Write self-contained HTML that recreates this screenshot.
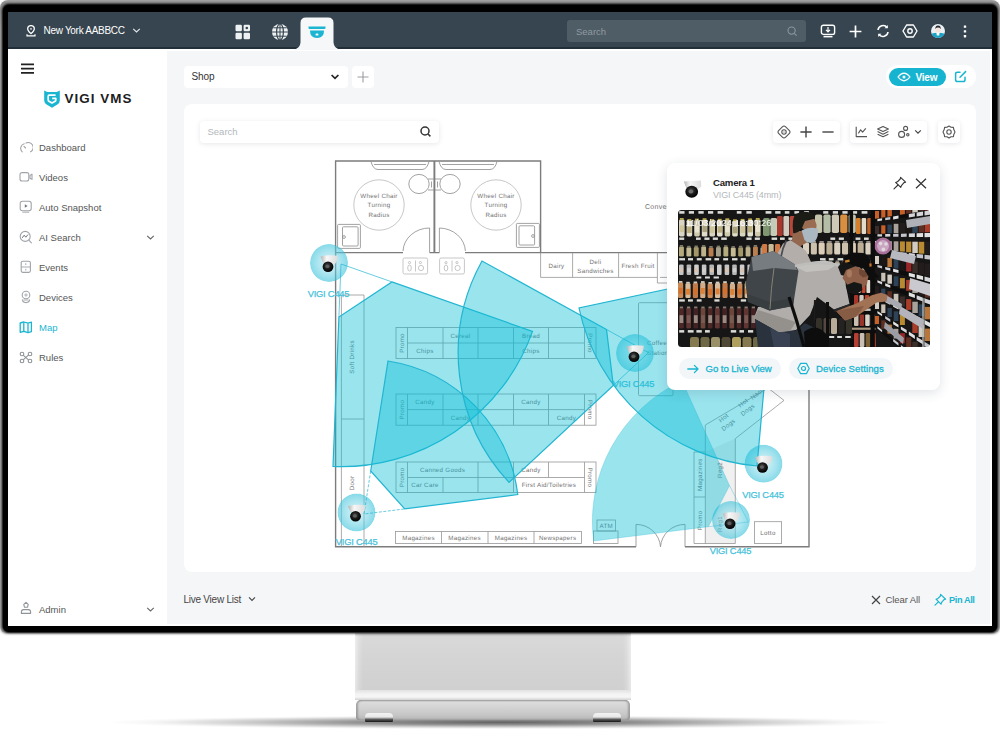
<!DOCTYPE html>
<html lang="en">
<head>
<meta charset="utf-8">
<title>VIGI VMS - Map</title>
<style>
*{box-sizing:border-box;margin:0;padding:0}
html,body{width:1000px;height:734px;overflow:hidden;background:#fff}
body{font-family:"Liberation Sans",sans-serif;color:#333;position:relative}
.abs{position:absolute}
#stage{position:absolute;left:0;top:0;width:1000px;height:734px;overflow:hidden;background:#fff}
/* monitor */
#bezel-edge{left:0;top:0;width:1000px;height:632.5px;border-radius:8px 8px 6px 6px;background:linear-gradient(#a2a2a2 0,#8c8c8c 3px,#a6a6a6 30px,#a6a6a6 100%);box-shadow:0 1px 2px rgba(0,0,0,.25)}
#bezel{left:3.2px;top:4.6px;width:993.8px;height:627px;border-radius:6px;background:#000;box-shadow:0 0 2.5px .8px #000,0 -1px 2px 0 rgba(0,0,0,.6)}
#screen{left:8px;top:12px;width:984px;height:614px;background:#fff;overflow:hidden}
#cbg{left:167px;top:51px;width:822.8px;height:573px;background:#f5f6f8}
/* screen children are positioned in page coords via #sc (offset -8,-12) */
#sc{position:absolute;left:-8px;top:-12px;width:1000px;height:734px}
#topbar{left:8px;top:12px;width:984px;height:37.3px;background:#36454f;border-bottom:2.2px solid #232f38}
#sidebar{left:8px;top:49.3px;width:159px;height:576.7px;background:#fff}
#wline{left:8px;top:49.3px;width:984px;height:1.8px;background:#fff}
.nav{position:absolute;left:39px;font-size:9.5px;color:#555;white-space:nowrap;line-height:12px}
.card{background:#fff;border-radius:5px}
.sh{box-shadow:0 1px 5px rgba(60,70,90,.13)}
.t{position:absolute;white-space:nowrap;line-height:1}
</style>
</head>
<body>
<div id="stage">
  <!-- stand -->
  <div class="abs" id="shadow" style="left:105px;top:716px;width:790px;height:14px;background:radial-gradient(ellipse 50% 50% at 50% 45%,rgba(60,60,60,.8) 0,rgba(80,80,80,.62) 36%,rgba(110,110,110,.3) 68%,rgba(160,160,160,.1) 88%,rgba(255,255,255,0) 100%)"></div>
  <div class="abs" id="neck" style="left:355px;top:630px;width:276px;height:60px;background:linear-gradient(90deg,#ececec 0,#dcdcdc 4px,#d4d4d4 8px,#d4d4d4 268px,#dcdcdc 272px,#ececec 276px)"></div>
  <div class="abs" style="left:355px;top:630px;width:276px;height:60px;background:linear-gradient(rgba(150,150,150,.45) 0,rgba(255,255,255,.12) 7px,rgba(255,255,255,0) 30px,rgba(0,0,0,.02) 60px)"></div>
  <div class="abs" style="left:355px;top:690px;width:276px;height:10px;background:linear-gradient(#e2e2e2 0,#f3f3f3 4px,#f6f6f6 7px,#d2d2d2 10px)"></div>
  <div class="abs" id="base" style="left:356px;top:699.5px;width:274px;height:20px;border-radius:5px 5px 3px 3px;background:linear-gradient(#aeaeae 0,#dcdcdc 2px,#d2d2d2 8px,#c6c6c6 15px,#b4b4b4 20px);box-shadow:inset 2px 0 2px rgba(120,120,120,.55),inset -2px 0 2px rgba(120,120,120,.55)"></div>
  <div class="abs" style="left:365px;top:713px;width:28px;height:9px;border-radius:4px 4px 1px 1px;background:linear-gradient(#f2f2f2 0,#e8e8e8 4px,#555 6.5px,#161616 9px)"></div>
  <div class="abs" style="left:593px;top:713px;width:28px;height:9px;border-radius:4px 4px 1px 1px;background:linear-gradient(#f2f2f2 0,#e8e8e8 4px,#555 6.5px,#161616 9px)"></div>

  <div class="abs" id="bezel-edge"></div>
  <div class="abs" id="bezel"></div>
  <div class="abs" id="screen"><div id="sc">
    <div class="abs" id="cbg"></div>
    <div class="abs" id="topbar"></div>
    <div class="abs" id="sidebar"></div>
    <div class="abs" id="wline"></div>
        <!-- active tab -->
    <svg class="abs" style="left:290px;top:12px" width="56" height="38" viewBox="290 12 56 38">
      <path d="M293.5 49.4 Q300 49 300.5 42.5 L300.5 23 Q300.5 17.5 306 17.5 L328 17.5 Q333.5 17.5 333.5 23 L333.5 42.5 Q334 49 340.5 49.4 L340.5 50 L293.5 50 Z" fill="#f6f7f9"/>
      <!-- dome camera icon -->
      <path d="M308.5 26.5 H325.5 V28 Q325.5 29 324.5 29 H309.5 Q308.5 29 308.5 28 Z" fill="#1ab5d1"/>
      <path d="M310 30.5 H324 Q324 38 317 38 Q310 38 310 30.5 Z" fill="#1ab5d1"/>
      <rect x="315.6" y="33.6" width="2.8" height="2" rx=".6" fill="#f5f6f8"/>
    </svg>
    <!-- topbar left -->
    <svg class="abs" style="left:25.2px;top:24.6px" width="12" height="13" viewBox="0 0 12 13" fill="none" stroke="#fff" stroke-width="1.3">
      <path d="M6 8.6 C3.6 6.4 2.7 5.2 2.7 3.9 A3.3 3.3 0 0 1 9.3 3.9 C9.3 5.2 8.4 6.4 6 8.6 Z"/>
      <circle cx="6" cy="3.9" r=".8" fill="#fff" stroke="none"/>
      <path d="M2 9.2 V10.8 H10 V9.2" stroke-width="1.2"/>
    </svg>
    <div class="t" style="left:43.5px;top:26.2px;font-size:10px;color:#fff;letter-spacing:-.3px">New York AABBCC</div>
    <svg class="abs" style="left:132px;top:27px" width="9" height="7" viewBox="0 0 9 7" fill="none" stroke="#e6eaec" stroke-width="1.1"><path d="M1.2 1.8 L4.5 5 L7.8 1.8"/></svg>
    <!-- grid icon -->
    <svg class="abs" style="left:235px;top:24px" width="16" height="16" viewBox="0 0 16 16" fill="#eef1f2">
      <rect x=".5" y=".8" width="6.4" height="6.4" rx="1.2"/><rect x="8.6" y=".8" width="6.4" height="6.4" rx="1.2"/>
      <rect x=".5" y="8.8" width="6.4" height="6.4" rx="1.2"/><rect x="8.6" y="8.8" width="6.4" height="6.4" rx="1.2"/>
      <circle cx="11.8" cy="4" r="1.3" fill="#36454f"/>
    </svg>
    <!-- globe icon -->
    <svg class="abs" style="left:271px;top:23px" width="18" height="18" viewBox="0 0 18 18">
      <circle cx="9" cy="9" r="8" fill="#eef1f2"/>
      <g fill="none" stroke="#36454f" stroke-width="1.2"><ellipse cx="9" cy="9" rx="3.4" ry="8"/><path d="M1 9 H17 M9 1 V17 M2.4 4.8 H15.6 M2.4 13.2 H15.6" stroke-width="1"/></g>
    </svg>
    <!-- search -->
    <div class="abs" style="left:567px;top:20px;width:239px;height:22px;border-radius:3px;background:#4f5d66"></div>
    <div class="t" style="left:576px;top:26.5px;font-size:9.5px;color:#909ba2">Search</div>
    <svg class="abs" style="left:786px;top:25px" width="12" height="12" viewBox="0 0 12 12" fill="none" stroke="#8b979e" stroke-width="1.1"><circle cx="5.6" cy="5.6" r="3.6"/><path d="M8.3 8.3 L10.6 10.6"/></svg>
    <!-- right icons -->
    <svg class="abs" style="left:820px;top:24px" width="16" height="14" viewBox="0 0 16 14" fill="none" stroke="#fff" stroke-width="1.4">
      <rect x="1.4" y="1.2" width="13.2" height="9.2" rx="2"/><path d="M8 3 V7.4 M6 5.8 L8 7.8 L10 5.8" stroke-width="1.2"/><path d="M3.5 12.6 H12.5" stroke-width="1.6"/>
    </svg>
    <svg class="abs" style="left:849px;top:25px" width="13" height="13" viewBox="0 0 13 13" stroke="#fff" stroke-width="1.7"><path d="M6.5 .6 V12.4 M.6 6.5 H12.4"/></svg>
    <svg class="abs" style="left:876px;top:24px" width="14" height="14" viewBox="0 0 14 14" fill="none" stroke="#fff" stroke-width="1.6">
      <path d="M2 6 A5.1 5.1 0 0 1 11.2 3.6"/><path d="M12 8 A5.1 5.1 0 0 1 2.8 10.4"/>
      <path d="M11.8 1 V4.2 H8.6 Z M2.2 13 V9.8 H5.4 Z" fill="#fff" stroke="none"/>
    </svg>
    <svg class="abs" style="left:902px;top:24px" width="16" height="14" viewBox="0 0 16 14" fill="none" stroke="#fff" stroke-width="1.4">
      <path d="M4.6 1 H11.4 L15 7 L11.4 13 H4.6 L1 7 Z" stroke-linejoin="round"/><circle cx="8" cy="7" r="2.2"/>
    </svg>
    <svg class="abs" style="left:930px;top:23px" width="16" height="16" viewBox="0 0 16 16">
      <defs><clipPath id="avc"><circle cx="8" cy="8" r="7"/></clipPath></defs>
      <circle cx="8" cy="8" r="7.6" fill="#2b3840"/>
      <circle cx="8" cy="8" r="7" fill="#e9f1f5"/>
      <g clip-path="url(#avc)"><path d="M0 11 Q8 8.5 16 11 V16 H0 Z" fill="#1aa3c6"/><ellipse cx="8" cy="7" rx="2.6" ry="3.2" fill="#f7e3d9"/><path d="M5.2 6 Q5.4 2.6 8 2.6 Q10.8 2.6 10.8 6 Q9.6 4.6 8 4.6 Q6.4 4.6 5.2 6 Z" fill="#2a2a33"/><path d="M6.4 9.6 H9.6 L9.2 12.4 H6.8 Z" fill="#fff"/></g>
    </svg>
    <svg class="abs" style="left:963px;top:25px" width="4" height="13" viewBox="0 0 4 13" fill="#fff"><rect x=".8" y=".4" width="2.4" height="2.4" rx=".4"/><rect x=".8" y="5.2" width="2.4" height="2.4" rx=".4"/><rect x=".8" y="10" width="2.4" height="2.4" rx=".4"/></svg>
        <!-- hamburger -->
    <svg class="abs" style="left:21px;top:63px" width="13" height="11" viewBox="0 0 13 11" stroke="#222" stroke-width="1.7"><path d="M0 1.3 H13 M0 5.6 H13 M0 9.9 H13"/></svg>
    <!-- logo -->
    <svg class="abs" style="left:43px;top:89px" width="18" height="20" viewBox="0 0 18 20">
      <path d="M1.2 1.6 L4.2 3 H13.8 L16.8 1.6 V11.6 Q16.8 14.2 14.4 15.6 L9 18.8 L3.6 15.6 Q1.2 14.2 1.2 11.6 Z" fill="#1ab5d1"/>
      <path d="M12.6 6.2 H6.2 Q5.2 6.2 5.2 7.2 V11 Q5.2 11.8 5.9 12.2 L9 14 L12.1 12.2 Q12.8 11.8 12.8 11 V9.4 H9.2" fill="none" stroke="#fff" stroke-width="1.7" stroke-linejoin="round"/>
    </svg>
    <div class="t" style="left:64.5px;top:91.5px;font-size:13.4px;font-weight:bold;color:#1d1d1f;letter-spacing:1.05px">VIGI VMS</div>
    <!-- nav icons -->
    <svg class="abs" style="left:19.5px;top:141.5px" width="13" height="12" viewBox="0 0 13 12" fill="none" stroke="#a0a4a8" stroke-width="1.1" stroke-linecap="round"><path d="M2.2 9.8 A4.8 4.8 0 0 1 4.2 1.7"/><path d="M6 1.1 A4.8 4.8 0 0 1 10.6 9.8"/><path d="M4 4.4 L5.6 6" /></svg>
    <svg class="abs" style="left:19px;top:171px" width="15" height="12" viewBox="0 0 15 12" fill="none" stroke="#a0a4a8" stroke-width="1.1"><rect x="1" y="1.6" width="8.8" height="8.4" rx="2"/><path d="M11 4.4 L13 3.2 V8.4 L11 7.2 Z" stroke-linejoin="round"/></svg>
    <svg class="abs" style="left:19px;top:200px" width="14" height="13" viewBox="0 0 14 13" fill="none" stroke="#a0a4a8" stroke-width="1.1"><rect x="1.2" y="1.2" width="11" height="9.6" rx="2.2"/><path d="M5.8 4.2 L8.6 6 L5.8 7.8 Z" fill="#70767a" stroke="none"/><path d="M3.4 12.2 H10.2" stroke-width=".9"/></svg>
    <svg class="abs" style="left:19px;top:230px" width="14" height="14" viewBox="0 0 14 14" fill="none" stroke="#a0a4a8" stroke-width="1.1" stroke-linecap="round"><circle cx="6.2" cy="6.4" r="5"/><path d="M9.9 10.2 L12.4 12.8"/><path d="M3.4 7.6 L5.2 5.2 L6.8 7.2 L8.8 4.8" stroke="#70767a" stroke-width="1"/></svg>
    <svg class="abs" style="left:20px;top:260px" width="12" height="14" viewBox="0 0 12 14" fill="none" stroke="#a0a4a8" stroke-width="1.1"><rect x="1.2" y="1.2" width="9.2" height="11.2" rx="1.6"/><path d="M1.4 7 H10.2 M5.8 3.2 V5 M5.8 8.8 V10.6" stroke-width=".9"/></svg>
    <svg class="abs" style="left:20px;top:290px" width="12" height="14" viewBox="0 0 12 14" fill="none" stroke="#a0a4a8" stroke-width="1.1"><circle cx="6" cy="5" r="3.8"/><circle cx="6" cy="5" r="1.1" stroke-width=".9"/><path d="M2.4 9.6 Q2.4 12.6 6 12.6 Q9.6 12.6 9.6 9.6" /><path d="M3.4 10 H8.6" stroke-width=".9"/></svg>
    <svg class="abs" style="left:19px;top:321px" width="14" height="13" viewBox="0 0 14 13" fill="none" stroke="#1ab5d1" stroke-width="1.3" stroke-linejoin="round"><path d="M1.2 2 L4.8 1 L9 2.2 L12.4 1.2 V10.6 L9 11.6 L4.8 10.4 L1.2 11.4 Z"/><path d="M4.8 1.2 V10.2 M9 2.4 V11.4"/></svg>
    <svg class="abs" style="left:19px;top:351px" width="14" height="13" viewBox="0 0 14 13" fill="none" stroke="#8f9498" stroke-width="1.1" stroke-linecap="round"><path d="M2 2.2 L11.6 10.8 M11.6 2.2 L2 10.8"/><circle cx="3" cy="3" r="1.8" fill="#fff"/><circle cx="11" cy="3" r="1.8" fill="#fff"/><circle cx="3" cy="10" r="1.8" fill="#fff"/><circle cx="11" cy="10" r="1.8" fill="#fff"/></svg>
    <div class="nav" style="top:141.5px">Dashboard</div>
    <div class="nav" style="top:171.5px">Videos</div>
    <div class="nav" style="top:201.5px">Auto Snapshot</div>
    <div class="nav" style="top:231.5px">AI Search</div>
    <div class="nav" style="top:261.5px">Events</div>
    <div class="nav" style="top:291.5px">Devices</div>
    <div class="nav" style="top:321.5px;color:#1ab5d1">Map</div>
    <div class="nav" style="top:351.5px">Rules</div>
    <svg class="abs" style="left:146px;top:234px" width="9" height="7" viewBox="0 0 9 7" fill="none" stroke="#666" stroke-width="1.1"><path d="M1.2 1.8 L4.5 5 L7.8 1.8"/></svg>
    <!-- admin -->
    <svg class="abs" style="left:19px;top:601px" width="14" height="14" viewBox="0 0 14 14" fill="none" stroke="#8f9498" stroke-width="1.1" stroke-linejoin="round"><path d="M7 1.4 L9.2 3.4 L8.6 6.2 H5.4 L4.8 3.4 Z"/><path d="M2.4 12.4 V10.8 Q2.4 8.8 4.6 8.6 H9.4 Q11.6 8.8 11.6 10.8 V12.4 Z"/></svg>
    <div class="nav" style="top:603.5px">Admin</div>
    <svg class="abs" style="left:146px;top:606px" width="9" height="7" viewBox="0 0 9 7" fill="none" stroke="#666" stroke-width="1.1"><path d="M1.2 1.8 L4.5 5 L7.8 1.8"/></svg>
        <!-- view bar -->
    <div class="abs card" style="left:183.5px;top:65.5px;width:164px;height:22px;border-radius:4px"></div>
    <div class="t" style="left:191.5px;top:72px;font-size:10px;color:#333;letter-spacing:-.1px">Shop</div>
    <svg class="abs" style="left:330px;top:73px" width="10" height="8" viewBox="0 0 10 8" fill="none" stroke="#222" stroke-width="1.7"><path d="M1.6 2 L5 5.4 L8.4 2"/></svg>
    <div class="abs card" style="left:351.5px;top:65.5px;width:22px;height:22px;border-radius:4px"></div>
    <svg class="abs" style="left:356.5px;top:70.5px" width="12" height="12" viewBox="0 0 12 12" stroke="#9a9ea2" stroke-width="1.1"><path d="M6 .5 V11.5 M.5 6 H11.5"/></svg>
    <div class="abs" style="left:886px;top:65px;width:90px;height:23px;border-radius:12px;background:#fff"></div>
    <div class="abs" style="left:889px;top:68px;width:57px;height:17.5px;border-radius:9px;background:#16b4d0"></div>
    <svg class="abs" style="left:897px;top:72px" width="14" height="10" viewBox="0 0 14 10" fill="none" stroke="#fff" stroke-width="1.2"><path d="M1 5 Q4 1.2 7 1.2 Q10 1.2 13 5 Q10 8.8 7 8.8 Q4 8.8 1 5 Z"/><circle cx="7" cy="5" r="1.5" fill="#fff" stroke="none"/></svg>
    <div class="t" style="left:915.5px;top:72.5px;font-size:10px;color:#fff;font-weight:bold;letter-spacing:-.2px">View</div>
    <svg class="abs" style="left:954px;top:70px" width="13" height="13" viewBox="0 0 13 13" fill="none" stroke="#1ab5d1" stroke-width="1.5" stroke-linecap="round"><path d="M6 2.2 H3.4 Q1.6 2.2 1.6 4 V9.8 Q1.6 11.6 3.4 11.6 H9.2 Q11 11.6 11 9.8 V7.2"/><path d="M6 7.2 L11.6 1.6"/></svg>
    <!-- main card -->
    <div class="abs card" style="left:183.5px;top:104px;width:792.5px;height:467.5px;border-radius:8px"></div>
    <div class="abs card sh" style="left:199.5px;top:120.5px;width:239.5px;height:22.5px;border-radius:4px"></div>
    <div class="t" style="left:207.5px;top:127px;font-size:9.5px;color:#b3b7bb">Search</div>
    <svg class="abs" style="left:419px;top:125px" width="13" height="13" viewBox="0 0 13 13" fill="none" stroke="#333" stroke-width="1.5"><circle cx="6" cy="6" r="4"/><path d="M9 9 L11.4 11.4"/></svg>
    <!-- toolbar -->
    <div class="abs card sh" style="left:773px;top:120.5px;width:66.5px;height:22px;border-radius:4px"></div>
    <div class="abs card sh" style="left:850px;top:120.5px;width:76.5px;height:22px;border-radius:4px"></div>
    <div class="abs card sh" style="left:937.5px;top:120.5px;width:22px;height:22px;border-radius:4px"></div>
    <svg class="abs" style="left:776.5px;top:124.5px" width="14" height="14" viewBox="0 0 14 14" fill="none" stroke="#555" stroke-width="1.1" stroke-linejoin="round"><path d="M7 1 Q7.8 1 8.4 1.6 L12.4 5.6 Q13 6.2 13 7 Q13 7.8 12.4 8.4 L8.4 12.4 Q7.8 13 7 13 Q6.2 13 5.6 12.4 L1.6 8.4 Q1 7.8 1 7 Q1 6.2 1.6 5.6 L5.6 1.6 Q6.2 1 7 1 Z"/><circle cx="7" cy="7" r="2.2"/><circle cx="7" cy="7" r=".6" fill="#555" stroke="none"/></svg>
    <svg class="abs" style="left:799.5px;top:125.5px" width="12" height="12" viewBox="0 0 12 12" stroke="#444" stroke-width="1.4"><path d="M6 .4 V11.6 M.4 6 H11.6"/></svg>
    <svg class="abs" style="left:821.5px;top:125.5px" width="12" height="12" viewBox="0 0 12 12" stroke="#444" stroke-width="1.4"><path d="M.4 6 H11.6"/></svg>
    <svg class="abs" style="left:854.5px;top:125.5px" width="13" height="12" viewBox="0 0 13 12" fill="none" stroke="#555" stroke-width="1.1" stroke-linejoin="round"><path d="M1.2 .8 V10.6 H12"/><path d="M3.4 7.4 L5.6 3.8 L7.6 6.2 L10.8 2.4"/></svg>
    <svg class="abs" style="left:876px;top:124.5px" width="14" height="14" viewBox="0 0 14 14" fill="none" stroke="#555" stroke-width="1.1" stroke-linejoin="round"><path d="M7 1.4 L12.4 4 L7 6.6 L1.6 4 Z"/><path d="M1.6 6.6 L7 9.2 L12.4 6.6 M1.6 9.2 L7 11.8 L12.4 9.2"/></svg>
    <svg class="abs" style="left:897px;top:124.5px" width="14" height="14" viewBox="0 0 14 14" fill="none" stroke="#555" stroke-width="1.1"><circle cx="8.6" cy="3.4" r="2"/><circle cx="4.6" cy="9.4" r="3"/><circle cx="10.8" cy="9.8" r="1.2"/></svg>
    <svg class="abs" style="left:913.5px;top:128.5px" width="8" height="6" viewBox="0 0 8 6" fill="none" stroke="#444" stroke-width="1.2"><path d="M1.2 1.4 L4 4.2 L6.8 1.4"/></svg>
    <svg class="abs" style="left:941.5px;top:124.5px" width="14" height="14" viewBox="0 0 14 14" fill="none" stroke="#555" stroke-width="1.1" stroke-linejoin="round"><path d="M7 1 L9 2.2 L11.4 2.4 L11.8 4.6 L13 7 L11.8 9.4 L11.4 11.6 L9 11.8 L7 13 L5 11.8 L2.6 11.6 L2.2 9.4 L1 7 L2.2 4.6 L2.6 2.4 L5 2.2 Z"/><circle cx="7" cy="7" r="2.2"/></svg>
    <!-- bottom bar -->
    <div class="t" style="left:183.5px;top:594.5px;font-size:10px;color:#444;letter-spacing:-.25px">Live View List</div>
    <svg class="abs" style="left:248px;top:596px" width="8" height="6" viewBox="0 0 8 6" fill="none" stroke="#444" stroke-width="1.1"><path d="M1 1.4 L4 4.4 L7 1.4"/></svg>
    <svg class="abs" style="left:871px;top:594.5px" width="10" height="10" viewBox="0 0 10 10" stroke="#444" stroke-width="1.2"><path d="M1 1 L9 9 M9 1 L1 9"/></svg>
    <div class="t" style="left:885.5px;top:595px;font-size:9.5px;color:#555;letter-spacing:-.1px">Clear All</div>
    <svg class="abs" style="left:932.5px;top:592.5px" width="14" height="14" viewBox="0 0 14 14" fill="none" stroke="#1ab5d1" stroke-width="1.2" stroke-linejoin="round" stroke-linecap="round"><path d="M7.6 1.4 L12.6 6.2 L11 6.6 L8.6 9.4 L8 11.2 L3 6.2 L4.8 5.6 L7.4 3 Z"/><path d="M5.4 8.8 L2 12.2"/></svg>
    <div class="t" style="left:949px;top:595.6px;font-size:9.2px;color:#1ab5d1;font-weight:bold;letter-spacing:-.4px">Pin All</div>
        <svg class="abs" style="left:184px;top:104px" width="792" height="467" viewBox="184 104 792 467">
      <defs>
        <radialGradient id="halo"><stop offset="0" stop-color="#8adbea" stop-opacity=".35"/><stop offset=".45" stop-color="#6fd3e5" stop-opacity=".5"/><stop offset=".85" stop-color="#4cc8de" stop-opacity=".6"/><stop offset=".97" stop-color="#3fc4dc" stop-opacity=".62"/><stop offset="1" stop-color="#3fc4dc" stop-opacity=".3"/></radialGradient>
        <linearGradient id="camtop" x1="0" y1="0" x2="1" y2="0"><stop offset="0" stop-color="#b4b4b4"/><stop offset=".35" stop-color="#f7f7f7"/><stop offset="1" stop-color="#dcdcdc"/></linearGradient>
        <radialGradient id="camdome" cx=".45" cy=".4" r=".6"><stop offset="0" stop-color="#555"/><stop offset=".5" stop-color="#1c1c1c"/><stop offset="1" stop-color="#000"/></radialGradient>
        
      </defs>
      <!-- floor plan -->
      <g fill="none" stroke="#7c7c7c" stroke-width="1.4">
        <path d="M403 252.6 H335.6 V161 H540.6 V252.6 H809 V546.8 H685 M636 546.8 H335.6 V252"/>
        <path d="M434.4 161 V252.6" stroke-width="1.9"/>
        <path d="M429.6 252.6 H439.4 M465 252.6 H540.6"/>
      </g>
      <g fill="none" stroke="#8a8a8a" stroke-width=".8">
        <path d="M403 251 A26.6 24 0 0 1 429.6 228 V252.6 M439.4 252.6 V228 A26.6 24 0 0 1 465.4 251"/>
        <path d="M636 546.8 V524.4 A24.5 24 0 0 1 660.5 546.8 A24.5 24 0 0 1 685 524.4 V546.8"/>
        <path d="M371 161.5 Q373 169.5 378 169.5 H422 Q427 169.5 429 161.5 M374 164.5 H426 M439 161.5 Q441 169.5 446 169.5 H490 Q495 169.5 497 161.5 M442 164.5 H494"/>
        <ellipse cx="419" cy="184" rx="10.2" ry="9.6"/><path d="M428 179 H434 M428 190 H434 M431.5 181.5 V187.5"/>
        <ellipse cx="450" cy="184" rx="10.2" ry="9.6"/><path d="M435 179 H441 M435 190 H441 M437.5 181.5 V187.5"/>
        <rect x="337.6" y="224.4" width="22.8" height="24" rx="1"/><rect x="342.5" y="226.8" width="15.6" height="19.2" rx="1"/><circle cx="344" cy="237" r="1.4"/>
        <rect x="516.4" y="223.4" width="23" height="24" rx="1"/><rect x="519" y="225.8" width="15.6" height="19.2" rx="1"/><circle cx="533" cy="236" r="1.4"/>
      </g>
      <g fill="none" stroke="#b9b9b9" stroke-width=".8">
        <circle cx="379" cy="205" r="25.2"/><circle cx="496" cy="205" r="25.2"/>
        <rect x="403" y="258" width="24.6" height="16" rx="1.5"/><rect x="439.6" y="258" width="24.8" height="16" rx="1.5"/>
        <path d="M415.5 260.5 V271.5 M452 260.5 V271.5"/>
        <ellipse cx="409.5" cy="268" rx="1.8" ry="3"/><circle cx="409.5" cy="262.6" r="1.1"/><circle cx="421" cy="268" r="2.6"/><circle cx="420.4" cy="262.6" r="1.1"/>
        <ellipse cx="446" cy="268" rx="1.8" ry="3"/><circle cx="446" cy="262.6" r="1.1"/><circle cx="457.6" cy="268" r="2.6"/><circle cx="457" cy="262.6" r="1.1"/>
      </g>
      <g fill="none" stroke="#969696" stroke-width=".8">
        <path d="M540.6 252.6 V277.4 H657.4 M572.6 252.6 V277.4 M618.6 252.6 V277.4 M657.4 252.6 V283 H700 M660 277.4 H700"/>
        <rect x="396" y="327.5" width="200" height="31.0"/><path d="M407.5 343 H584.5 M407.5 327.5 V358.5 M443 327.5 V358.5 M478 327.5 V358.5 M513.5 327.5 V358.5 M548.5 327.5 V358.5 M584.5 327.5 V358.5"/>
        <rect x="396" y="394" width="200" height="31.19999999999999"/><path d="M407.5 409.6 H584.5 M407.5 394 V425.2 M443 394 V425.2 M478 394 V425.2 M513.5 394 V425.2 M548.5 394 V425.2 M584.5 394 V425.2"/>
        <rect x="396" y="462" width="200" height="30.5"/><path d="M407.5 477.5 H584.5 M407.5 462 V492.5 M478 462 V492.5 M513.5 462 V492.5 M548.5 462 V477.5 M584.5 462 V492.5 M443 477.5 V492.5"/>
        <rect x="395.5" y="531.4" width="186" height="12"/><path d="M441.5 531.4 V543.4 M488 531.4 V543.4 M534 531.4 V543.4"/>
        <path d="M341.4 295 H364 V546.8 M341.4 295 V546.8 M341.4 419 H364"/>
        <rect x="638.5" y="302.7" width="34.5" height="93" rx="1"/>
        <rect x="597" y="520" width="18.4" height="11"/><rect x="593.6" y="531" width="24.4" height="12.5"/>
        <rect x="754.4" y="521.7" width="27.2" height="21.8"/><path d="M705.3 543.5 V452 L735.3 438.6 V543.5 Z" fill="#f0f0f0" stroke="none"/>
        <path d="M694 452 H705.3 M694 452 V543.5 H735.3 M694 497 H705.3 M705.3 543.5 V425 L768 388 L784 400.4 L735.3 438.6 V543.5"/>
      </g>
      <!-- plan labels -->
      <g font-family="'Liberation Sans',sans-serif" font-size="6.2" fill="#737373" text-anchor="middle" letter-spacing=".3" text-rendering="geometricPrecision">
        <text x="379" y="198">Wheel Chair</text><text x="379" y="207.4">Turning</text><text x="379" y="217">Radius</text>
        <text x="496" y="198">Wheel Chair</text><text x="496" y="207.4">Turning</text><text x="496" y="217">Radius</text>
        <text x="556.5" y="268.4">Dairy</text><text x="595.5" y="263.6">Deli</text><text x="595.5" y="272.6">Sandwiches</text><text x="638" y="268.4">Fresh Fruit</text>
        <text x="645" y="209.4" text-anchor="start" font-size="7">Convenience Store</text>
        <text x="460.5" y="337.6">Cereal</text><text x="531" y="337.6">Bread</text><text x="425" y="353">Chips</text><text x="531" y="353">Chips</text>
        <text x="425" y="404">Candy</text><text x="531" y="404">Candy</text><text x="460.5" y="419.6">Candy</text><text x="566.5" y="419.6">Candy</text>
        <text x="442.5" y="472">Canned Goods</text><text x="531" y="472">Candy</text><text x="425" y="487.4">Car Care</text><text x="549" y="487.4">First Aid/Toiletries</text>
        <text x="418.5" y="539.6">Magazines</text><text x="464.6" y="539.6">Magazines</text><text x="511" y="539.6">Magazines</text><text x="557.6" y="539.6">Newspapers</text>
        <text x="606.2" y="527.6">ATM</text><text x="768" y="534.6">Lotto</text>
        <text x="647" y="345" text-anchor="start">Coffee</text><text x="647" y="354.6" text-anchor="start">Station</text>
        <text transform="translate(354 357) rotate(-90)">Soft Drinks</text>
        <text transform="translate(354 483) rotate(-90)">Door</text>
        <text transform="translate(403.6 343) rotate(-90)">Promo</text><text transform="translate(403.6 409.6) rotate(-90)">Promo</text><text transform="translate(403.6 477.4) rotate(-90)">Promo</text>
        <text transform="translate(588.4 343) rotate(90)">Promo</text><text transform="translate(588.4 409.6) rotate(90)">Promo</text><text transform="translate(588.4 477.4) rotate(90)">Promo</text>
        <text transform="translate(701.6 474.6) rotate(-90)">Magazines</text><text transform="translate(701.6 520.4) rotate(-90)">Promo</text>
        <text transform="translate(722 470) rotate(-90)">Reg2</text><text transform="translate(722 524) rotate(-90)">Reg1</text>
        <text transform="translate(725 419.4) rotate(-38)">Hot</text><text transform="translate(729.6 426.4) rotate(-38)">Dogs</text>
        <text transform="translate(744.4 404.4) rotate(-38)">Hot</text><text transform="translate(749 411.4) rotate(-38)">Dogs</text>
        <text transform="translate(761.4 393) rotate(-38)">Nachos</text>
      </g>
      <!-- cameras: halos and labels -->
      <circle cx="329" cy="263" r="19" fill="url(#halo)"/>
      <circle cx="356.5" cy="512.5" r="19" fill="url(#halo)"/>
      <circle cx="635" cy="353" r="19" fill="url(#halo)"/>
      <circle cx="763.5" cy="463.7" r="19" fill="url(#halo)"/>
      <circle cx="731" cy="520" r="19" fill="url(#halo)"/>
      <g font-family="'Liberation Sans',sans-serif" font-size="9.3" fill="#45c2da" stroke="#45c2da" stroke-width=".25" text-anchor="middle" letter-spacing="-.2">
      <text x="328.5" y="296.6">VIGI C445</text>
      <text x="356.6" y="545.1">VIGI C445</text>
      <text x="633.5" y="387">VIGI C445</text>
      <text x="763" y="498.2">VIGI C445</text>
      <text x="730.5" y="553.5">VIGI C445</text>
      </g>
      <!-- coverage sectors -->
      <path d="M391.9 281.9 L532.5 331.4 A203 203 0 0 1 333 466.5 L338.9 317 Z" fill="rgba(10,190,214,.41)" stroke="#22b5d1" stroke-width="1.2"/>
      <path d="M391.9 281.9 L341 264 L338.9 317" fill="none" stroke="#27b6d2" stroke-width=".7"/>
      <path d="M370.7 471 L388 361 A155 155 0 0 1 517.8 494.6 L404.7 508.9 Z" fill="rgba(10,190,214,.41)" stroke="#22b5d1" stroke-width="1.2"/>
      <path d="M370.7 471 L364 514 L404.7 508.9" fill="none" stroke="#27b6d2" stroke-width=".7" stroke-dasharray="3 1.5"/>
      <path d="M606.5 329.5 L482 261 A190 190 0 0 0 509 482.4 L613.3 385.4 Z" fill="rgba(10,190,214,.41)" stroke="#22b5d1" stroke-width="1.2"/>
      <path d="M606.5 329.5 L648.5 352.7 L613.3 385.4" fill="none" stroke="#27b6d2" stroke-width=".7"/>
      <path d="M726.1 276.5 L579 308 A200 200 0 0 0 757 466 L770.5 315.8 Z" fill="rgba(10,190,214,.41)" stroke="#22b5d1" stroke-width="1.2"/>
      <path d="M726.1 276.5 L775 266 L770.5 315.8" fill="none" stroke="#27b6d2" stroke-width=".7"/>
      <path d="M729.5 485.6 L682 381 A155 155 0 0 0 593.6 541 L708.3 526.7 Z" fill="rgba(10,190,214,.41)" stroke="#22b5d1" stroke-opacity=".35" stroke-width=".8"/>
      <path d="M729.5 485.6 L748.5 522 L708.3 526.7" fill="none" stroke="#27b6d2" stroke-opacity=".6" stroke-width=".6"/>
      <g transform="translate(329 263)"><path d="M-8.4 -6.6 Q0 -8.8 8.8 -7.2 Q9 -3 6.4 0.4 Q2 3.4 -3.4 2.6 Q-7 -1 -8.4 -6.6 Z" fill="url(#camtop)"/> <ellipse cx="-1" cy="3.8" rx="5.4" ry="5.2" fill="url(#camdome)"/> <ellipse cx="-1.6" cy="3.4" rx="2" ry="1.7" fill="#5f5f5f"/></g>
      <g transform="translate(356.5 512.5)"><path d="M-8.4 -6.6 Q0 -8.8 8.8 -7.2 Q9 -3 6.4 0.4 Q2 3.4 -3.4 2.6 Q-7 -1 -8.4 -6.6 Z" fill="url(#camtop)"/> <ellipse cx="-1" cy="3.8" rx="5.4" ry="5.2" fill="url(#camdome)"/> <ellipse cx="-1.6" cy="3.4" rx="2" ry="1.7" fill="#5f5f5f"/></g>
      <g transform="translate(635 353)"><path d="M-8.4 -6.6 Q0 -8.8 8.8 -7.2 Q9 -3 6.4 0.4 Q2 3.4 -3.4 2.6 Q-7 -1 -8.4 -6.6 Z" fill="url(#camtop)"/> <ellipse cx="-1" cy="3.8" rx="5.4" ry="5.2" fill="url(#camdome)"/> <ellipse cx="-1.6" cy="3.4" rx="2" ry="1.7" fill="#5f5f5f"/></g>
      <g transform="translate(763.5 463.7)"><path d="M-8.4 -6.6 Q0 -8.8 8.8 -7.2 Q9 -3 6.4 0.4 Q2 3.4 -3.4 2.6 Q-7 -1 -8.4 -6.6 Z" fill="url(#camtop)"/> <ellipse cx="-1" cy="3.8" rx="5.4" ry="5.2" fill="url(#camdome)"/> <ellipse cx="-1.6" cy="3.4" rx="2" ry="1.7" fill="#5f5f5f"/></g>
      <g transform="translate(731 520)"><path d="M-8.4 -6.6 Q0 -8.8 8.8 -7.2 Q9 -3 6.4 0.4 Q2 3.4 -3.4 2.6 Q-7 -1 -8.4 -6.6 Z" fill="url(#camtop)"/> <ellipse cx="-1" cy="3.8" rx="5.4" ry="5.2" fill="url(#camdome)"/> <ellipse cx="-1.6" cy="3.4" rx="2" ry="1.7" fill="#5f5f5f"/></g>
    </svg>
        <div class="abs" style="left:667px;top:163px;width:272.5px;height:227px;border-radius:8px;background:#fff;box-shadow:0 3px 12px rgba(40,60,80,.14)"></div>
    <svg class="abs" style="left:682px;top:179px" width="21" height="20" viewBox="-10.5 -10 21 20">
      <path d="M-8.6 -7.4 L8.4 -8.6 L8.8 -2.4 Q4 2.2 -4 1.6 Q-7.6 -2 -8.6 -7.4 Z" fill="url(#camtop)"/>
      <ellipse cx="-.8" cy="2.8" rx="6.4" ry="6" fill="url(#camdome)"/>
      <ellipse cx="-1.6" cy="2.4" rx="2.3" ry="2" fill="#6d6d6d"/>
    </svg>
    <div class="t" style="left:713px;top:177.5px;font-size:9.6px;font-weight:bold;color:#222;letter-spacing:-.2px">Camera 1</div>
    <div class="t" style="left:713px;top:190.8px;font-size:9px;color:#b4b8bc;letter-spacing:-.15px">VIGI C445 (4mm)</div>
    <svg class="abs" style="left:891.5px;top:176px" width="15" height="14" viewBox="0 0 15 14" fill="none" stroke="#333" stroke-width="1.1" stroke-linejoin="round" stroke-linecap="round"><path d="M8.6 1.4 L13.6 6.2 L12 6.6 L9.4 9.6 L8.8 11.4 L3.6 6.4 L5.4 5.8 L8.2 3 Z"/><path d="M6 9 L2 12.8"/></svg>
    <svg class="abs" style="left:915px;top:177.5px" width="12" height="11" viewBox="0 0 12 11" stroke="#333" stroke-width="1.2"><path d="M1 .8 L11 10.2 M11 .8 L1 10.2"/></svg>
    <!-- camera snapshot -->
    <svg class="abs" style="left:678px;top:209.5px" width="252" height="137" viewBox="0 0 252 137">
      <defs><clipPath id="phc"><rect x="0" y="0" width="252" height="137" rx="3.5"/></clipPath>
      <filter id="phb" x="-2%" y="-2%" width="104%" height="104%"><feGaussianBlur stdDeviation=".7"/></filter></defs>
      <g clip-path="url(#phc)"><g filter="url(#phb)">
        <!--PH0--><rect x="0" y="0" width="252" height="138" fill="#121212"/>
        <rect x="0" y="0.6" width="200" height="3.6" fill="#191919"/>
        <rect x="1.2" y="1.1" width="5.3" height="2.6" fill="#dcdcd8"/>
        <rect x="10.8" y="1.1" width="5.2" height="2.6" fill="#dcdcd8"/>
        <rect x="20.4" y="1.1" width="5.3" height="2.6" fill="#dcdcd8"/>
        <rect x="30" y="1.1" width="5.2" height="2.6" fill="#dcdcd8"/>
        <rect x="39.6" y="1.1" width="5.6" height="2.6" fill="#dcdcd8"/>
        <rect x="58.8" y="1.1" width="4.7" height="2.6" fill="#dcdcd8"/>
        <rect x="68.4" y="1.1" width="5.4" height="2.6" fill="#dcdcd8"/>
        <rect x="87.6" y="1.1" width="5.8" height="2.6" fill="#dcdcd8"/>
        <rect x="97.2" y="1.1" width="5.3" height="2.6" fill="#dcdcd8"/>
        <rect x="106.8" y="1.1" width="4.6" height="2.6" fill="#dcdcd8"/>
        <rect x="116.4" y="1.1" width="4.7" height="2.6" fill="#dcdcd8"/>
        <rect x="126" y="1.1" width="4.9" height="2.6" fill="#dcdcd8"/>
        <rect x="145.2" y="1.1" width="5.1" height="2.6" fill="#dcdcd8"/>
        <rect x="154.8" y="1.1" width="5.2" height="2.6" fill="#dcdcd8"/>
        <rect x="164.4" y="1.1" width="5.2" height="2.6" fill="#dcdcd8"/>
        <rect x="174" y="1.1" width="5.1" height="2.6" fill="#dcdcd8"/>
        <rect x="183.6" y="1.1" width="5.8" height="2.6" fill="#dcdcd8"/>
        <rect x="193.2" y="1.1" width="5.6" height="2.6" fill="#dcdcd8"/>
        <rect x="1" y="9.5" width="5.6" height="17" rx="1.4" fill="#d9d5c4"/>
        <rect x="1.8" y="8" width="3.9" height="1.8" fill="#b9a94e"/>
        <rect x="1.6" y="15.4" width="4.5" height="6.5" fill="#cfc59a"/>
        <rect x="8.6" y="10.6" width="5.6" height="15.9" rx="1.4" fill="#e6e2d2"/>
        <rect x="9.4" y="9.1" width="3.9" height="1.8" fill="#b9a94e"/>
        <rect x="9.2" y="16.5" width="4.5" height="6.5" fill="#b9ae7c"/>
        <rect x="16.2" y="10.1" width="5.6" height="16.4" rx="1.4" fill="#cfc9ae"/>
        <rect x="17" y="8.6" width="3.9" height="1.8" fill="#b9a94e"/>
        <rect x="16.8" y="16" width="4.5" height="6.5" fill="#e9e4d0"/>
        <rect x="23.8" y="9.7" width="5.6" height="16.9" rx="1.4" fill="#e2ddc9"/>
        <rect x="24.6" y="8.2" width="3.9" height="1.8" fill="#b9a94e"/>
        <rect x="24.4" y="15.6" width="4.5" height="6.5" fill="#a9a27c"/>
        <rect x="31.4" y="10.7" width="5.6" height="15.8" rx="1.4" fill="#d9d5c4"/>
        <rect x="32.2" y="9.2" width="3.9" height="1.8" fill="#b9a94e"/>
        <rect x="32" y="16.6" width="4.5" height="6.5" fill="#cfc59a"/>
        <rect x="39" y="10.2" width="5.6" height="16.2" rx="1.4" fill="#e6e2d2"/>
        <rect x="39.8" y="8.8" width="3.9" height="1.8" fill="#b9a94e"/>
        <rect x="39.6" y="16.2" width="4.5" height="6.5" fill="#b9ae7c"/>
        <rect x="46.6" y="9.8" width="5.6" height="16.7" rx="1.4" fill="#cfc9ae"/>
        <rect x="47.4" y="8.3" width="3.9" height="1.8" fill="#b9a94e"/>
        <rect x="47.2" y="15.8" width="4.5" height="6.5" fill="#e9e4d0"/>
        <rect x="54.2" y="10.8" width="5.6" height="15.7" rx="1.4" fill="#e2ddc9"/>
        <rect x="55" y="9.3" width="3.9" height="1.8" fill="#b9a94e"/>
        <rect x="54.8" y="16.8" width="4.5" height="6.5" fill="#a9a27c"/>
        <rect x="61.8" y="10.4" width="5.6" height="16.1" rx="1.4" fill="#d9d5c4"/>
        <rect x="62.6" y="8.9" width="3.9" height="1.8" fill="#b9a94e"/>
        <rect x="62.4" y="16.4" width="4.5" height="6.5" fill="#cfc59a"/>
        <rect x="69.4" y="9.9" width="5.6" height="16.6" rx="1.4" fill="#e6e2d2"/>
        <rect x="70.2" y="8.4" width="3.9" height="1.8" fill="#b9a94e"/>
        <rect x="70" y="15.9" width="4.5" height="6.5" fill="#b9ae7c"/>
        <rect x="77" y="9.5" width="5.6" height="17" rx="1.4" fill="#cfc9ae"/>
        <rect x="77.8" y="8" width="3.9" height="1.8" fill="#b9a94e"/>
        <rect x="77.6" y="15.4" width="4.5" height="6.5" fill="#e9e4d0"/>
        <rect x="85" y="8" width="6.8" height="18" rx="1.7" fill="#7f9670"/>
        <rect x="92.4" y="8" width="6.8" height="18" rx="1.7" fill="#c4cbb8"/>
        <rect x="99" y="6" width="5.8" height="20" rx="1.4" fill="#a8382e"/>
        <rect x="105.4" y="6" width="5.8" height="20" rx="1.4" fill="#d2cbc0"/>
        <rect x="111.8" y="6" width="5.8" height="20" rx="1.4" fill="#b8463a"/>
        <rect x="137" y="4.5" width="7.2" height="18.5" rx="1.8" fill="#c4c3ab"/>
        <rect x="145.4" y="4.5" width="7.2" height="18.5" rx="1.8" fill="#b4bea6"/>
        <rect x="153.8" y="4.5" width="7.2" height="18.5" rx="1.8" fill="#cfcab8"/>
        <rect x="162.2" y="4.5" width="7.2" height="18.5" rx="1.8" fill="#d98f42"/>
        <rect x="170.6" y="4.5" width="7.2" height="18.5" rx="1.8" fill="#c4c3ab"/>
        <rect x="178" y="8" width="4.6" height="16" rx="1.1" fill="#d67f2c"/>
        <rect x="183.6" y="8" width="4.6" height="16" rx="1.1" fill="#e2dacb"/>
        <rect x="189.2" y="8" width="4.6" height="16" rx="1.1" fill="#bf6228"/>
        <rect x="0" y="27" width="200" height="3.4" fill="#191919"/>
        <rect x="1.2" y="27.5" width="5" height="2.4" fill="#dcdcd8"/>
        <rect x="18" y="27.5" width="4.7" height="2.4" fill="#dcdcd8"/>
        <rect x="26.4" y="27.5" width="5.1" height="2.4" fill="#dcdcd8"/>
        <rect x="34.8" y="27.5" width="5.1" height="2.4" fill="#dcdcd8"/>
        <rect x="43.2" y="27.5" width="5.6" height="2.4" fill="#dcdcd8"/>
        <rect x="68.4" y="27.5" width="5.2" height="2.4" fill="#dcdcd8"/>
        <rect x="76.8" y="27.5" width="5.1" height="2.4" fill="#dcdcd8"/>
        <rect x="93.6" y="27.5" width="5.5" height="2.4" fill="#dcdcd8"/>
        <rect x="102" y="27.5" width="4.7" height="2.4" fill="#dcdcd8"/>
        <rect x="110.4" y="27.5" width="5.8" height="2.4" fill="#dcdcd8"/>
        <rect x="118.8" y="27.5" width="4.7" height="2.4" fill="#dcdcd8"/>
        <rect x="152.4" y="27.5" width="4.8" height="2.4" fill="#dcdcd8"/>
        <rect x="160.8" y="27.5" width="5.1" height="2.4" fill="#dcdcd8"/>
        <rect x="177.6" y="27.5" width="4.8" height="2.4" fill="#dcdcd8"/>
        <rect x="186" y="27.5" width="4.7" height="2.4" fill="#dcdcd8"/>
        <rect x="194.4" y="27.5" width="4.9" height="2.4" fill="#dcdcd8"/>
        <rect x="1" y="36.5" width="4.9" height="10" rx="1.2" fill="#b4aa7c"/>
        <rect x="1.7" y="35" width="3.4" height="1.8" fill="#7f7a6a"/>
        <rect x="8.4" y="37.3" width="4.9" height="9.2" rx="1.2" fill="#c4bb92"/>
        <rect x="9.1" y="35.8" width="3.4" height="1.8" fill="#7f7a6a"/>
        <rect x="15.8" y="37" width="4.9" height="9.5" rx="1.2" fill="#a39768"/>
        <rect x="16.5" y="35.5" width="3.4" height="1.8" fill="#7f7a6a"/>
        <rect x="23.2" y="36.6" width="4.9" height="9.9" rx="1.2" fill="#bdb28c"/>
        <rect x="23.9" y="35.1" width="3.4" height="1.8" fill="#7f7a6a"/>
        <rect x="30.6" y="37.5" width="4.9" height="9" rx="1.2" fill="#b87e50"/>
        <rect x="31.3" y="36" width="3.4" height="1.8" fill="#7f7a6a"/>
        <rect x="38" y="37.1" width="4.9" height="9.4" rx="1.2" fill="#a6a18c"/>
        <rect x="38.7" y="35.6" width="3.4" height="1.8" fill="#7f7a6a"/>
        <rect x="45.4" y="36.7" width="4.9" height="9.8" rx="1.2" fill="#b4aa7c"/>
        <rect x="46.1" y="35.2" width="3.4" height="1.8" fill="#7f7a6a"/>
        <rect x="52.8" y="37.6" width="4.9" height="8.9" rx="1.2" fill="#c4bb92"/>
        <rect x="53.5" y="36.1" width="3.4" height="1.8" fill="#7f7a6a"/>
        <rect x="60.2" y="37.2" width="4.9" height="9.3" rx="1.2" fill="#a39768"/>
        <rect x="60.9" y="35.7" width="3.4" height="1.8" fill="#7f7a6a"/>
        <rect x="67.6" y="36.9" width="4.9" height="9.6" rx="1.2" fill="#bdb28c"/>
        <rect x="68.3" y="35.4" width="3.4" height="1.8" fill="#7f7a6a"/>
        <rect x="75" y="36.5" width="4.9" height="10" rx="1.2" fill="#b87e50"/>
        <rect x="75.7" y="35" width="3.4" height="1.8" fill="#7f7a6a"/>
        <rect x="82.4" y="37.3" width="4.9" height="9.2" rx="1.2" fill="#a6a18c"/>
        <rect x="83.1" y="35.8" width="3.4" height="1.8" fill="#7f7a6a"/>
        <rect x="84" y="34" width="5.2" height="12.5" rx="1.3" fill="#cf7a46"/>
        <rect x="90.5" y="34" width="5.2" height="12.5" rx="1.3" fill="#c9bc96"/>
        <rect x="97" y="34" width="5.2" height="12.5" rx="1.3" fill="#cf7a46"/>
        <rect x="125" y="32.5" width="6.1" height="12" rx="1.5" fill="#d9d0c0"/>
        <rect x="125.9" y="31" width="4.3" height="1.8" fill="#98928a"/>
        <rect x="132.8" y="32.5" width="6.1" height="12" rx="1.5" fill="#cdc2ae"/>
        <rect x="133.7" y="31" width="4.3" height="1.8" fill="#98928a"/>
        <rect x="140.6" y="32.5" width="6.1" height="12" rx="1.5" fill="#dccdb6"/>
        <rect x="141.5" y="31" width="4.3" height="1.8" fill="#98928a"/>
        <rect x="148.4" y="32.5" width="6.1" height="12" rx="1.5" fill="#bdae96"/>
        <rect x="149.3" y="31" width="4.3" height="1.8" fill="#98928a"/>
        <rect x="156.2" y="32.5" width="6.1" height="12" rx="1.5" fill="#d9d0c0"/>
        <rect x="157.1" y="31" width="4.3" height="1.8" fill="#98928a"/>
        <rect x="164" y="32.5" width="6.1" height="12" rx="1.5" fill="#cdc2ae"/>
        <rect x="164.9" y="31" width="4.3" height="1.8" fill="#98928a"/>
        <rect x="171.8" y="32.5" width="6.1" height="12" rx="1.5" fill="#dccdb6"/>
        <rect x="172.7" y="31" width="4.3" height="1.8" fill="#98928a"/>
        <rect x="179.6" y="32.5" width="6.1" height="12" rx="1.5" fill="#bdae96"/>
        <rect x="180.5" y="31" width="4.3" height="1.8" fill="#98928a"/>
        <rect x="187.4" y="32.5" width="6.1" height="12" rx="1.5" fill="#d9d0c0"/>
        <rect x="188.3" y="31" width="4.3" height="1.8" fill="#98928a"/>
        <rect x="0" y="47.6" width="195" height="3.3" fill="#191919"/>
        <rect x="1.2" y="48.1" width="5.8" height="2.3" fill="#dcdcd8"/>
        <rect x="10" y="48.1" width="5" height="2.3" fill="#dcdcd8"/>
        <rect x="18.8" y="48.1" width="4.9" height="2.3" fill="#dcdcd8"/>
        <rect x="27.6" y="48.1" width="5.6" height="2.3" fill="#dcdcd8"/>
        <rect x="36.4" y="48.1" width="4.7" height="2.3" fill="#dcdcd8"/>
        <rect x="45.2" y="48.1" width="4.9" height="2.3" fill="#dcdcd8"/>
        <rect x="54" y="48.1" width="5.5" height="2.3" fill="#dcdcd8"/>
        <rect x="62.8" y="48.1" width="5" height="2.3" fill="#dcdcd8"/>
        <rect x="89.2" y="48.1" width="4.9" height="2.3" fill="#dcdcd8"/>
        <rect x="98" y="48.1" width="5" height="2.3" fill="#dcdcd8"/>
        <rect x="106.8" y="48.1" width="5.8" height="2.3" fill="#dcdcd8"/>
        <rect x="115.6" y="48.1" width="5.3" height="2.3" fill="#dcdcd8"/>
        <rect x="124.4" y="48.1" width="4.8" height="2.3" fill="#dcdcd8"/>
        <rect x="142" y="48.1" width="5.6" height="2.3" fill="#dcdcd8"/>
        <rect x="150.8" y="48.1" width="4.8" height="2.3" fill="#dcdcd8"/>
        <rect x="159.6" y="48.1" width="5.7" height="2.3" fill="#dcdcd8"/>
        <rect x="177.2" y="48.1" width="5.7" height="2.3" fill="#dcdcd8"/>
        <rect x="186" y="48.1" width="5.1" height="2.3" fill="#dcdcd8"/>
        <rect x="1" y="54.5" width="4.6" height="10.5" rx="1.1" fill="#c4c4c4"/>
        <rect x="1.5" y="58.2" width="3.6" height="4" fill="#d8c4b0"/>
        <rect x="8.6" y="54.5" width="4.6" height="10.5" rx="1.1" fill="#b6b6b6"/>
        <rect x="9.1" y="58.2" width="3.6" height="4" fill="#cfcfcf"/>
        <rect x="16.2" y="54.5" width="4.6" height="10.5" rx="1.1" fill="#cecece"/>
        <rect x="16.7" y="58.2" width="3.6" height="4" fill="#d8c4b0"/>
        <rect x="23.8" y="54.5" width="4.6" height="10.5" rx="1.1" fill="#c4c4c4"/>
        <rect x="24.3" y="58.2" width="3.6" height="4" fill="#cfcfcf"/>
        <rect x="31.4" y="54.5" width="4.6" height="10.5" rx="1.1" fill="#b6b6b6"/>
        <rect x="31.9" y="58.2" width="3.6" height="4" fill="#d8c4b0"/>
        <rect x="39" y="54.5" width="4.6" height="10.5" rx="1.1" fill="#cecece"/>
        <rect x="39.5" y="58.2" width="3.6" height="4" fill="#cfcfcf"/>
        <rect x="46.6" y="54.5" width="4.6" height="10.5" rx="1.1" fill="#c4c4c4"/>
        <rect x="47.1" y="58.2" width="3.6" height="4" fill="#d8c4b0"/>
        <rect x="54.2" y="54.5" width="4.6" height="10.5" rx="1.1" fill="#b6b6b6"/>
        <rect x="54.7" y="58.2" width="3.6" height="4" fill="#cfcfcf"/>
        <rect x="61.8" y="54.5" width="4.6" height="10.5" rx="1.1" fill="#cecece"/>
        <rect x="62.3" y="58.2" width="3.6" height="4" fill="#d8c4b0"/>
        <rect x="69.4" y="54.5" width="4.6" height="10.5" rx="1.1" fill="#c4c4c4"/>
        <rect x="69.9" y="58.2" width="3.6" height="4" fill="#cfcfcf"/>
        <rect x="0" y="66" width="76" height="3" fill="#191919"/>
        <rect x="18.4" y="66.5" width="4.9" height="2" fill="#dcdcd8"/>
        <rect x="27" y="66.5" width="4.9" height="2" fill="#dcdcd8"/>
        <rect x="35.6" y="66.5" width="5.3" height="2" fill="#dcdcd8"/>
        <rect x="61.4" y="66.5" width="4.7" height="2" fill="#dcdcd8"/>
        <rect x="0" y="72.5" width="5.2" height="15.5" rx="1.3" fill="#c98a58"/>
        <rect x="0.8" y="71" width="3.6" height="1.8" fill="#d2cbc0"/>
        <rect x="0.5" y="77.9" width="4.1" height="5.9" fill="#d4702e"/>
        <rect x="7.4" y="73.3" width="5.2" height="14.7" rx="1.3" fill="#d9bc9c"/>
        <rect x="8.2" y="71.8" width="3.6" height="1.8" fill="#d2cbc0"/>
        <rect x="7.9" y="78.8" width="4.1" height="5.9" fill="#dc8238"/>
        <rect x="14.8" y="73" width="5.2" height="15" rx="1.3" fill="#c07a46"/>
        <rect x="15.6" y="71.5" width="3.6" height="1.8" fill="#d2cbc0"/>
        <rect x="15.3" y="78.4" width="4.1" height="5.9" fill="#d4702e"/>
        <rect x="22.2" y="72.6" width="5.2" height="15.4" rx="1.3" fill="#d4ac88"/>
        <rect x="23" y="71.1" width="3.6" height="1.8" fill="#d2cbc0"/>
        <rect x="22.7" y="78" width="4.1" height="5.9" fill="#dc8238"/>
        <rect x="29.6" y="73.5" width="5.2" height="14.5" rx="1.3" fill="#c98a58"/>
        <rect x="30.4" y="72" width="3.6" height="1.8" fill="#d2cbc0"/>
        <rect x="30.1" y="78.9" width="4.1" height="5.9" fill="#d4702e"/>
        <rect x="37" y="73.1" width="5.2" height="14.9" rx="1.3" fill="#d9bc9c"/>
        <rect x="37.8" y="71.6" width="3.6" height="1.8" fill="#d2cbc0"/>
        <rect x="37.5" y="78.5" width="4.1" height="5.9" fill="#dc8238"/>
        <rect x="44.4" y="72.7" width="5.2" height="15.3" rx="1.3" fill="#c07a46"/>
        <rect x="45.2" y="71.2" width="3.6" height="1.8" fill="#d2cbc0"/>
        <rect x="44.9" y="78.2" width="4.1" height="5.9" fill="#d4702e"/>
        <rect x="51.8" y="73.6" width="5.2" height="14.4" rx="1.3" fill="#d4ac88"/>
        <rect x="52.6" y="72.1" width="3.6" height="1.8" fill="#d2cbc0"/>
        <rect x="52.3" y="79" width="4.1" height="5.9" fill="#dc8238"/>
        <rect x="59.2" y="73.2" width="5.2" height="14.8" rx="1.3" fill="#c98a58"/>
        <rect x="60" y="71.7" width="3.6" height="1.8" fill="#d2cbc0"/>
        <rect x="59.7" y="78.6" width="4.1" height="5.9" fill="#d4702e"/>
        <rect x="66.6" y="72.9" width="5.2" height="15.1" rx="1.3" fill="#d9bc9c"/>
        <rect x="67.4" y="71.4" width="3.6" height="1.8" fill="#d2cbc0"/>
        <rect x="67.1" y="78.3" width="4.1" height="5.9" fill="#dc8238"/>
        <rect x="0" y="88.8" width="74" height="3.3" fill="#191919"/>
        <rect x="1.2" y="89.3" width="5.6" height="2.3" fill="#dcdcd8"/>
        <rect x="10" y="89.3" width="4.9" height="2.3" fill="#dcdcd8"/>
        <rect x="18.8" y="89.3" width="4.8" height="2.3" fill="#dcdcd8"/>
        <rect x="36.4" y="89.3" width="5.1" height="2.3" fill="#dcdcd8"/>
        <rect x="62.8" y="89.3" width="5.3" height="2.3" fill="#dcdcd8"/>
        <rect x="1" y="98" width="4.8" height="20.5" rx="1.2" fill="#4e2628"/>
        <rect x="1.7" y="96.5" width="3.3" height="1.8" fill="#8a7a72"/>
        <rect x="1.5" y="105.2" width="3.8" height="7.8" fill="#9a8a82"/>
        <rect x="8.2" y="98" width="4.8" height="20.5" rx="1.2" fill="#613432"/>
        <rect x="8.9" y="96.5" width="3.3" height="1.8" fill="#8a7a72"/>
        <rect x="8.7" y="105.2" width="3.8" height="7.8" fill="#7a5a52"/>
        <rect x="15.4" y="98" width="4.8" height="20.5" rx="1.2" fill="#432022"/>
        <rect x="16.1" y="96.5" width="3.3" height="1.8" fill="#8a7a72"/>
        <rect x="15.9" y="105.2" width="3.8" height="7.8" fill="#9a8a82"/>
        <rect x="22.6" y="98" width="4.8" height="20.5" rx="1.2" fill="#6e443a"/>
        <rect x="23.3" y="96.5" width="3.3" height="1.8" fill="#8a7a72"/>
        <rect x="23.1" y="105.2" width="3.8" height="7.8" fill="#7a5a52"/>
        <rect x="29.8" y="98" width="4.8" height="20.5" rx="1.2" fill="#4e2628"/>
        <rect x="30.5" y="96.5" width="3.3" height="1.8" fill="#8a7a72"/>
        <rect x="30.3" y="105.2" width="3.8" height="7.8" fill="#9a8a82"/>
        <rect x="37" y="98" width="4.8" height="20.5" rx="1.2" fill="#613432"/>
        <rect x="37.7" y="96.5" width="3.3" height="1.8" fill="#8a7a72"/>
        <rect x="37.5" y="105.2" width="3.8" height="7.8" fill="#7a5a52"/>
        <rect x="44.2" y="98" width="4.8" height="20.5" rx="1.2" fill="#432022"/>
        <rect x="44.9" y="96.5" width="3.3" height="1.8" fill="#8a7a72"/>
        <rect x="44.7" y="105.2" width="3.8" height="7.8" fill="#9a8a82"/>
        <rect x="51.4" y="98" width="4.8" height="20.5" rx="1.2" fill="#6e443a"/>
        <rect x="52.1" y="96.5" width="3.3" height="1.8" fill="#8a7a72"/>
        <rect x="51.9" y="105.2" width="3.8" height="7.8" fill="#7a5a52"/>
        <rect x="58.6" y="98" width="4.8" height="20.5" rx="1.2" fill="#4e2628"/>
        <rect x="59.3" y="96.5" width="3.3" height="1.8" fill="#8a7a72"/>
        <rect x="59.1" y="105.2" width="3.8" height="7.8" fill="#9a8a82"/>
        <rect x="65.8" y="98" width="4.8" height="20.5" rx="1.2" fill="#613432"/>
        <rect x="66.5" y="96.5" width="3.3" height="1.8" fill="#8a7a72"/>
        <rect x="66.3" y="105.2" width="3.8" height="7.8" fill="#7a5a52"/>
        <rect x="73" y="98" width="4.8" height="20.5" rx="1.2" fill="#432022"/>
        <rect x="73.7" y="96.5" width="3.3" height="1.8" fill="#8a7a72"/>
        <rect x="73.5" y="105.2" width="3.8" height="7.8" fill="#9a8a82"/>
        <rect x="0" y="119.6" width="80" height="3.5" fill="#191919"/>
        <rect x="1.2" y="120.1" width="5" height="2.5" fill="#dcdcd8"/>
        <rect x="9.8" y="120.1" width="5.8" height="2.5" fill="#dcdcd8"/>
        <rect x="18.4" y="120.1" width="5.4" height="2.5" fill="#dcdcd8"/>
        <rect x="27" y="120.1" width="4.8" height="2.5" fill="#dcdcd8"/>
        <rect x="52.8" y="120.1" width="5.4" height="2.5" fill="#dcdcd8"/>
        <rect x="61.4" y="120.1" width="4.6" height="2.5" fill="#dcdcd8"/>
        <rect x="70" y="120.1" width="5.2" height="2.5" fill="#dcdcd8"/>
        <rect x="12" y="127" width="9" height="11" rx="2.3" fill="#857a50"/>
        <rect x="22.5" y="127" width="9" height="11" rx="2.3" fill="#6e6846"/>
        <rect x="33" y="127" width="9" height="11" rx="2.3" fill="#9a9068"/>
        <rect x="43.5" y="127" width="9" height="11" rx="2.3" fill="#504a36"/>
        <rect x="54" y="127" width="9" height="11" rx="2.3" fill="#b0a060"/>
        <rect x="64.5" y="127" width="9" height="11" rx="2.3" fill="#857a50"/>
        <rect x="75" y="127" width="9" height="11" rx="2.3" fill="#6e6846"/>
        <rect x="172" y="60" width="26" height="78" fill="#0e0e0e"/>
        <rect x="176" y="85" width="4.3" height="11" rx="1.1" fill="#a8362c"/>
        <rect x="181.4" y="85" width="4.3" height="11" rx="1.1" fill="#d2cac0"/>
        <rect x="186.8" y="85" width="4.3" height="11" rx="1.1" fill="#b8442c"/>
        <rect x="192.2" y="85" width="4.3" height="11" rx="1.1" fill="#a8362c"/>
        <rect x="176" y="104.5" width="4.5" height="11.5" rx="1.1" fill="#c9bfb0"/>
        <rect x="181.6" y="104.5" width="4.5" height="11.5" rx="1.1" fill="#98362c"/>
        <rect x="187.2" y="104.5" width="4.5" height="11.5" rx="1.1" fill="#d8d2c8"/>
        <rect x="192.8" y="104.5" width="4.5" height="11.5" rx="1.1" fill="#c9bfb0"/>
        <rect x="176" y="123" width="4.6" height="14" rx="1.2" fill="#b44030"/>
        <rect x="181.8" y="123" width="4.6" height="14" rx="1.2" fill="#c8c0b4"/>
        <rect x="187.6" y="123" width="4.6" height="14" rx="1.2" fill="#7a5e36"/>
        <rect x="193.4" y="123" width="4.6" height="14" rx="1.2" fill="#b44030"/>
        <rect x="174" y="98.5" width="24" height="2.4" fill="#c9c6c0"/>
        <rect x="174" y="117.6" width="24" height="2.2" fill="#a89880"/>
        <rect x="138" y="108" width="6" height="16" rx="1.5" fill="#34302c"/>
        <rect x="145.5" y="108" width="6" height="16" rx="1.5" fill="#524840"/>
        <rect x="153" y="108" width="6" height="16" rx="1.5" fill="#b8ac98"/>
        <rect x="160.5" y="108" width="6" height="16" rx="1.5" fill="#262220"/>
        <rect x="168" y="108" width="6" height="16" rx="1.5" fill="#34302c"/>
        <rect x="150" y="125.5" width="25" height="3" fill="#191919"/>
        <rect x="151.2" y="126" width="5" height="2" fill="#dcdcd8"/>
        <rect x="159.2" y="126" width="4.7" height="2" fill="#dcdcd8"/>
        <rect x="167.2" y="126" width="5.5" height="2" fill="#dcdcd8"/>
        <rect x="150" y="52" width="5" height="14" rx="1.3" fill="#cfc6b4"/>
        <rect x="150.8" y="50.5" width="3.5" height="1.8" fill="#8a847a"/>
        <rect x="156.8" y="52" width="5" height="14" rx="1.3" fill="#bfb6a2"/>
        <rect x="157.6" y="50.5" width="3.5" height="1.8" fill="#8a847a"/>
        <rect x="163.6" y="52" width="5" height="14" rx="1.3" fill="#d6cdbc"/>
        <rect x="164.4" y="50.5" width="3.5" height="1.8" fill="#8a847a"/>
        <rect x="170.4" y="52" width="5" height="14" rx="1.3" fill="#a89c88"/>
        <rect x="171.2" y="50.5" width="3.5" height="1.8" fill="#8a847a"/>
        <rect x="177.2" y="52" width="5" height="14" rx="1.3" fill="#cfc6b4"/>
        <rect x="178" y="50.5" width="3.5" height="1.8" fill="#8a847a"/>
        <rect x="184" y="52" width="5" height="14" rx="1.3" fill="#bfb6a2"/>
        <rect x="184.8" y="50.5" width="3.5" height="1.8" fill="#8a847a"/>
        <rect x="190.8" y="52" width="5" height="14" rx="1.3" fill="#d6cdbc"/>
        <rect x="191.6" y="50.5" width="3.5" height="1.8" fill="#8a847a"/>
        <rect x="174" y="70" width="3.9" height="13" rx="1" fill="#b43a2e"/>
        <rect x="178.8" y="70" width="3.9" height="13" rx="1" fill="#d8d0c6"/>
        <rect x="183.6" y="70" width="3.9" height="13" rx="1" fill="#c24630"/>
        <rect x="188.4" y="70" width="3.9" height="13" rx="1" fill="#e0dad0"/>
        <polygon points="194,0 252,0 252,138 198,138 196,60" fill="#171413"/>
        <rect x="197" y="-14" width="4" height="8" fill="#3a2e2a"/>
        <rect x="203.2" y="-16.4" width="4.2" height="8.6" fill="#3a2e2a"/>
        <rect x="209.4" y="-18.8" width="4.5" height="9.1" fill="#3a2e2a"/>
        <rect x="215.7" y="-21.2" width="4.7" height="9.7" fill="#c9c2b6"/>
        <rect x="221.9" y="-23.6" width="5" height="10.2" fill="#a8a29a"/>
        <rect x="228.1" y="-25.9" width="5.2" height="10.8" fill="#982626"/>
        <rect x="234.3" y="-28.3" width="5.5" height="11.3" fill="#982626"/>
        <rect x="240.6" y="-30.7" width="5.7" height="11.9" fill="#c85e28"/>
        <rect x="246.8" y="-33.1" width="6" height="12.4" fill="#1a1716"/>
        <polygon points="196,-6 252,-22.5 252,-18.3 196,-3.4" fill="#0c0c0c"/>
        <polygon points="199.4,-6.3 204.1,-7.7 204.1,-5.4 199.4,-4" fill="#d6d6da"/>
        <polygon points="207.2,-8.7 212.3,-10.2 212.3,-7.5 207.2,-6.1" fill="#c4c4cc"/>
        <polygon points="215.1,-11 220.5,-12.6 220.5,-9.7 215.1,-8.1" fill="#d6d6da"/>
        <polygon points="222.9,-13.4 228.7,-15.1 228.7,-11.8 222.9,-10.1" fill="#e2e2e2"/>
        <polygon points="238.6,-18.1 245.1,-20 245.1,-16.1 238.6,-14.2" fill="#c4c4cc"/>
        <polygon points="246.5,-20.5 253.3,-22.4 253.3,-18.3 246.5,-16.3" fill="#e2e2e2"/>
        <rect x="197" y="1" width="4" height="8" fill="#c85e28"/>
        <rect x="203.2" y="-0.6" width="4.2" height="8.6" fill="#c85e28"/>
        <rect x="209.4" y="-2.1" width="4.5" height="9.1" fill="#c85e28"/>
        <rect x="215.7" y="-3.7" width="4.7" height="9.7" fill="#1a1716"/>
        <rect x="221.9" y="-5.2" width="5" height="10.2" fill="#c85e28"/>
        <rect x="228.1" y="-6.8" width="5.2" height="10.8" fill="#5e2e22"/>
        <rect x="234.3" y="-8.3" width="5.5" height="11.3" fill="#d2ccc2"/>
        <rect x="240.6" y="-9.9" width="5.7" height="11.9" fill="#3a2e2a"/>
        <rect x="246.8" y="-11.4" width="6" height="12.4" fill="#982626"/>
        <polygon points="196,9 252,-0 252,4.5 196,11.6" fill="#0c0c0c"/>
        <polygon points="199.4,9 204.1,8.3 204.1,10.6 199.4,11.3" fill="#e2e2e2"/>
        <polygon points="207.2,7.7 212.3,6.9 212.3,9.5 207.2,10.3" fill="#c4c4cc"/>
        <polygon points="215.1,6.4 220.5,5.6 220.5,8.5 215.1,9.4" fill="#e2e2e2"/>
        <polygon points="230.8,3.9 236.9,2.9 236.9,6.4 230.8,7.4" fill="#d6d6da"/>
        <polygon points="238.6,2.6 245.1,1.6 245.1,5.4 238.6,6.5" fill="#d6d6da"/>
        <polygon points="246.5,1.3 253.3,0.2 253.3,4.4 246.5,5.5" fill="#d6d6da"/>
        <rect x="197" y="16" width="4" height="8" fill="#3a2e2a"/>
        <rect x="203.2" y="15.3" width="4.2" height="8.6" fill="#c85e28"/>
        <rect x="209.4" y="14.6" width="4.5" height="9.1" fill="#2e4258"/>
        <rect x="215.7" y="13.8" width="4.7" height="9.7" fill="#a8a29a"/>
        <rect x="221.9" y="13.1" width="5" height="10.2" fill="#221e1c"/>
        <rect x="228.1" y="12.4" width="5.2" height="10.8" fill="#1a1716"/>
        <rect x="234.3" y="11.7" width="5.5" height="11.3" fill="#2e4258"/>
        <rect x="240.6" y="10.9" width="5.7" height="11.9" fill="#5e2e22"/>
        <rect x="246.8" y="10.2" width="6" height="12.4" fill="#a83c2a"/>
        <polygon points="196,24 252,22.5 252,27.3 196,26.6" fill="#0c0c0c"/>
        <polygon points="199.4,24.3 204.1,24.2 204.1,26.5 199.4,26.6" fill="#d6d6da"/>
        <polygon points="207.2,24.1 212.3,24 212.3,26.6 207.2,26.7" fill="#d6d6da"/>
        <polygon points="215.1,23.9 220.5,23.8 220.5,26.7 215.1,26.8" fill="#c4c4cc"/>
        <polygon points="222.9,23.7 228.7,23.5 228.7,26.8 222.9,26.9" fill="#c4c4cc"/>
        <polygon points="230.8,23.5 236.9,23.3 236.9,26.9 230.8,27" fill="#d6d6da"/>
        <polygon points="238.6,23.3 245.1,23.1 245.1,27 238.6,27.1" fill="#e2e2e2"/>
        <polygon points="246.5,23 253.3,22.9 253.3,27 246.5,27.2" fill="#e2e2e2"/>
        <rect x="197" y="31" width="4" height="8" fill="#d2ccc2"/>
        <rect x="203.2" y="31.1" width="4.2" height="8.6" fill="#a8a29a"/>
        <rect x="209.4" y="31.2" width="4.5" height="9.1" fill="#a8a29a"/>
        <rect x="215.7" y="31.3" width="4.7" height="9.7" fill="#a8a29a"/>
        <rect x="221.9" y="31.4" width="5" height="10.2" fill="#b88a32"/>
        <rect x="228.1" y="31.6" width="5.2" height="10.8" fill="#b88a32"/>
        <rect x="234.3" y="31.7" width="5.5" height="11.3" fill="#d2ccc2"/>
        <rect x="240.6" y="31.8" width="5.7" height="11.9" fill="#b88a32"/>
        <rect x="246.8" y="31.9" width="6" height="12.4" fill="#221e1c"/>
        <polygon points="196,39 252,45 252,50.1 196,41.6" fill="#0c0c0c"/>
        <polygon points="199.4,39.7 204.1,40.2 204.1,42.5 199.4,42" fill="#d6d6da"/>
        <polygon points="215.1,41.4 220.5,41.9 220.5,44.9 215.1,44.3" fill="#d6d6da"/>
        <polygon points="222.9,42.2 228.7,42.8 228.7,46.1 222.9,45.5" fill="#c4c4cc"/>
        <polygon points="230.8,43.1 236.9,43.7 236.9,47.3 230.8,46.6" fill="#d6d6da"/>
        <polygon points="238.6,43.9 245.1,44.6 245.1,48.5 238.6,47.8" fill="#c4c4cc"/>
        <polygon points="246.5,44.8 253.3,45.5 253.3,49.7 246.5,49" fill="#c4c4cc"/>
        <rect x="197" y="46" width="4" height="8" fill="#d2ccc2"/>
        <rect x="203.2" y="46.9" width="4.2" height="8.6" fill="#1a1716"/>
        <rect x="209.4" y="47.9" width="4.5" height="9.1" fill="#b8763a"/>
        <rect x="215.7" y="48.8" width="4.7" height="9.7" fill="#2e4258"/>
        <rect x="221.9" y="49.8" width="5" height="10.2" fill="#1a1716"/>
        <rect x="228.1" y="50.7" width="5.2" height="10.8" fill="#982626"/>
        <rect x="234.3" y="51.7" width="5.5" height="11.3" fill="#3a2e2a"/>
        <rect x="240.6" y="52.6" width="5.7" height="11.9" fill="#241c1a"/>
        <rect x="246.8" y="53.6" width="6" height="12.4" fill="#241c1a"/>
        <polygon points="196,54 252,67.5 252,72.9 196,56.6" fill="#0c0c0c"/>
        <polygon points="199.4,55 204.1,56.1 204.1,58.4 199.4,57.3" fill="#c4c4cc"/>
        <polygon points="207.2,56.9 212.3,58.1 212.3,60.7 207.2,59.5" fill="#d6d6da"/>
        <polygon points="215.1,58.8 220.5,60.1 220.5,63.1 215.1,61.8" fill="#e2e2e2"/>
        <polygon points="230.8,62.7 236.9,64.2 236.9,67.7 230.8,66.2" fill="#e2e2e2"/>
        <polygon points="238.6,64.6 245.1,66.2 245.1,70 238.6,68.5" fill="#e2e2e2"/>
        <polygon points="246.5,66.6 253.3,68.2 253.3,72.4 246.5,70.7" fill="#d6d6da"/>
        <rect x="197" y="61" width="4" height="8" fill="#1a1716"/>
        <rect x="203.2" y="62.8" width="4.2" height="8.6" fill="#c9c2b6"/>
        <rect x="209.4" y="64.6" width="4.5" height="9.1" fill="#d2ccc2"/>
        <rect x="215.7" y="66.3" width="4.7" height="9.7" fill="#2e4258"/>
        <rect x="221.9" y="68.1" width="5" height="10.2" fill="#b88a32"/>
        <rect x="228.1" y="69.9" width="5.2" height="10.8" fill="#a83c2a"/>
        <rect x="234.3" y="71.7" width="5.5" height="11.3" fill="#a8a29a"/>
        <rect x="240.6" y="73.4" width="5.7" height="11.9" fill="#241c1a"/>
        <rect x="246.8" y="75.2" width="6" height="12.4" fill="#5e2e22"/>
        <polygon points="196,69 252,90 252,95.7 196,71.6" fill="#0c0c0c"/>
        <polygon points="199.4,70.3 204.1,72.1 204.1,74.4 199.4,72.6" fill="#d6d6da"/>
        <polygon points="207.2,73.3 212.3,75.2 212.3,77.8 207.2,75.9" fill="#e2e2e2"/>
        <polygon points="230.8,82.3 236.9,84.6 236.9,88.1 230.8,85.9" fill="#e2e2e2"/>
        <polygon points="238.6,85.3 245.1,87.7 245.1,91.6 238.6,89.2" fill="#d6d6da"/>
        <polygon points="246.5,88.3 253.3,90.8 253.3,95 246.5,92.5" fill="#d6d6da"/>
        <rect x="197" y="76" width="4" height="8" fill="#241c1a"/>
        <rect x="203.2" y="78.6" width="4.2" height="8.6" fill="#2e4258"/>
        <rect x="209.4" y="81.2" width="4.5" height="9.1" fill="#5e2e22"/>
        <rect x="215.7" y="83.8" width="4.7" height="9.7" fill="#c9c2b6"/>
        <rect x="221.9" y="86.4" width="5" height="10.2" fill="#3a2e2a"/>
        <rect x="228.1" y="89.1" width="5.2" height="10.8" fill="#a83c2a"/>
        <rect x="234.3" y="91.7" width="5.5" height="11.3" fill="#a8a29a"/>
        <rect x="240.6" y="94.3" width="5.7" height="11.9" fill="#2e4258"/>
        <rect x="246.8" y="96.9" width="6" height="12.4" fill="#b8763a"/>
        <polygon points="196,84 252,112.5 252,118.5 196,86.6" fill="#0c0c0c"/>
        <polygon points="199.4,85.6 204.1,88 204.1,90.3 199.4,87.9" fill="#d6d6da"/>
        <polygon points="207.2,89.7 212.3,92.3 212.3,94.9 207.2,92.3" fill="#c4c4cc"/>
        <polygon points="215.1,93.8 220.5,96.5 220.5,99.4 215.1,96.7" fill="#e2e2e2"/>
        <polygon points="222.9,97.8 228.7,100.8 228.7,104 222.9,101.1" fill="#d6d6da"/>
        <polygon points="230.8,101.9 236.9,105 236.9,108.5 230.8,105.5" fill="#e2e2e2"/>
        <polygon points="238.6,106 245.1,109.2 245.1,113.1 238.6,109.8" fill="#d6d6da"/>
        <polygon points="246.5,110.1 253.3,113.5 253.3,117.7 246.5,114.2" fill="#e2e2e2"/>
        <rect x="197" y="91" width="4" height="8" fill="#d2ccc2"/>
        <rect x="203.2" y="94.4" width="4.2" height="8.6" fill="#c9c2b6"/>
        <rect x="209.4" y="97.9" width="4.5" height="9.1" fill="#2e4258"/>
        <rect x="215.7" y="101.3" width="4.7" height="9.7" fill="#2e4258"/>
        <rect x="221.9" y="104.8" width="5" height="10.2" fill="#b88a32"/>
        <rect x="228.1" y="108.2" width="5.2" height="10.8" fill="#1a1716"/>
        <rect x="234.3" y="111.7" width="5.5" height="11.3" fill="#a83c2a"/>
        <rect x="240.6" y="115.1" width="5.7" height="11.9" fill="#d2ccc2"/>
        <rect x="246.8" y="118.6" width="6" height="12.4" fill="#b8763a"/>
        <polygon points="196,99 252,135 252,141.3 196,101.6" fill="#0c0c0c"/>
        <polygon points="199.4,100.9 204.1,104 204.1,106.3 199.4,103.2" fill="#e2e2e2"/>
        <polygon points="207.2,106.1 212.3,109.3 212.3,111.9 207.2,108.7" fill="#c4c4cc"/>
        <polygon points="215.1,111.2 220.5,114.7 220.5,117.6 215.1,114.2" fill="#e2e2e2"/>
        <polygon points="222.9,116.4 228.7,120.1 228.7,123.3 222.9,119.6" fill="#d6d6da"/>
        <polygon points="230.8,121.5 236.9,125.4 236.9,129 230.8,125.1" fill="#e2e2e2"/>
        <polygon points="238.6,126.7 245.1,130.8 245.1,134.6 238.6,130.5" fill="#d6d6da"/>
        <polygon points="246.5,131.8 253.3,136.1 253.3,140.3 246.5,136" fill="#c4c4cc"/>
        <rect x="197" y="106" width="4" height="8" fill="#c85e28"/>
        <rect x="203.2" y="110.3" width="4.2" height="8.6" fill="#5e2e22"/>
        <rect x="209.4" y="114.6" width="4.5" height="9.1" fill="#b8763a"/>
        <rect x="215.7" y="118.8" width="4.7" height="9.7" fill="#a8a29a"/>
        <rect x="221.9" y="123.1" width="5" height="10.2" fill="#982626"/>
        <rect x="228.1" y="127.4" width="5.2" height="10.8" fill="#5e2e22"/>
        <rect x="234.3" y="131.7" width="5.5" height="11.3" fill="#3a2e2a"/>
        <rect x="240.6" y="135.9" width="5.7" height="11.9" fill="#241c1a"/>
        <rect x="246.8" y="140.2" width="6" height="12.4" fill="#a83c2a"/>
        <polygon points="196,114 252,157.5 252,164.1 196,116.6" fill="#0c0c0c"/>
        <polygon points="199.4,116.3 204.1,119.9 204.1,122.2 199.4,118.6" fill="#d6d6da"/>
        <polygon points="215.1,128.7 220.5,132.9 220.5,135.8 215.1,131.6" fill="#c4c4cc"/>
        <polygon points="222.9,134.9 228.7,139.4 228.7,142.6 222.9,138.1" fill="#c4c4cc"/>
        <polygon points="230.8,141.1 236.9,145.8 236.9,149.4 230.8,144.7" fill="#d6d6da"/>
        <polygon points="238.6,147.3 245.1,152.3 245.1,156.2 238.6,151.2" fill="#d6d6da"/>
        <polygon points="246.5,153.6 253.3,158.8 253.3,163 246.5,157.7" fill="#d6d6da"/>
        <circle cx="205" cy="36" r="8.6" fill="#a8709a"/><circle cx="205" cy="36" r="6" fill="#c9a6c2"/><circle cx="202.6" cy="33.6" r="1.8" fill="#e2d8e0"/><circle cx="208" cy="34" r="1.8" fill="#e2d8e0"/><circle cx="205.4" cy="39.4" r="1.8" fill="#e2d8e0"/>
        <polygon points="232,68 252,74 252,86 231,79" fill="#c9c9cf"/>
        <polygon points="222,96 246,110 245,119 221,104" fill="#b4b4bc"/>
        <polygon points="206,84 224,94 223,100 205,90" fill="#a8a8b0"/>
        <polygon points="228,10 252,6 252,14 229,18" fill="#b0b0b8"/>
        <polygon points="207,112 226,128 225,134 206,118" fill="#9c9ca4"/>
        <polygon points="214,40 238,46 236,54 212,48" fill="#b8b8c0"/>
        <rect x="244" y="88" width="2.6" height="50" fill="#b0b0b0" opacity=".7"/>
        <rect x="171.5" y="0" width="3.6" height="60" fill="#0c0c0c"/>
        <rect x="192.6" y="0" width="4.2" height="138" fill="#0a0a0a"/>
        <polygon points="112.7,30 105,33.5 99.6,43.3 98,56 118,58 133,52 128,41 120.3,34.6" fill="#b3aeaa"/>
        <polygon points="113.8,31 115,21 127,21 128,33 122,36.5" fill="#946850"/>
        <path d="M115.2 23 Q113.5 8 118 4 Q124 .6 132 2.4 Q137 4 136.6 8.6 Q131 8 128 11.5 Q127 17 123 19.5 Q119 24 115.2 23 Z" fill="#1c1a19"/>
        <polygon points="127,11 136.4,8.8 138.6,15 138,20 128,21 124,18" fill="#9a6d52"/>
        <path d="M123.6 20.5 Q131 16 139.6 18.6 Q141.4 26 136.5 32 Q130.5 34.6 126.5 30 Z" fill="#aab8c2"/>
        <path d="M108.3 30.5 Q104.5 38 103 47" stroke="#4a4d52" stroke-width="1.7" fill="none"/>
        <polygon points="77,108 117,121 127,113 147,123 151,138 80,138" fill="#29323d"/>
        <polygon points="92,118 112,124 112,138 96,138" fill="#374352"/>
        <polygon points="118,57 132,52 147,50.5 160,54 166,62 168,76 171.5,94 156,99.5 139,87 132,105 118,120 101,122 76,108 80,97 111,94 116,60" fill="#b0adaa"/>
        <polygon points="118,57 132,52 147,50.5 160,54 150,60 128,62" fill="#c4c2bf"/>
        <polygon points="101,122 76,108 80,100 118,112 112,121" fill="#94918d"/>
        <polygon points="156,99.5 171.5,94 172,96.6 156.6,102" fill="#2a2a2a"/>
        <polygon points="73.5,47 95.5,41 117,54.5 120.5,61 115,96 91.5,100.5 70,92 67.5,74" fill="#40444a"/>
        <polygon points="73.5,47 95.5,41 117,54.5 119,60 96,58 75,61" fill="#777b80"/>
        <polygon points="70,92 91.5,100.5 115,96 116,88 92,92 69,84" fill="#383c41"/>
        <path d="M96 58 Q93 78 92 99" stroke="#8c8a78" stroke-width=".9" fill="none"/>
        <path d="M117 56 Q140 50 163 56" stroke="#bdbdbb" stroke-width="2.6" fill="none"/>
        <path d="M111 87 L119 112 L126 137" stroke="#111" stroke-width="3.2" fill="none"/>
        <path d="M137 90 L136 112" stroke="#1a1a1a" stroke-width="2" fill="none"/>
        <path d="M126 122 Q138 112 148 124 L151 138 H127 Z" fill="#0d0d0d"/>
        <rect x="148" y="92" width="3" height="46" fill="#0f0f0f"/>
        <polygon points="158.3,101.3 171.4,95.9 178,93.7 194.3,85 203,82.8 209.6,85 208.5,91.5 198.7,92.6 178,106.8 167,110.5" fill="#a27255"/>
        <polygon points="178,106.8 167,110.5 158.3,101.3 168,99 186,96" fill="#875c44"/>
        <polygon points="160,57 166,50 176,54 179,62 171,67 163,65" fill="#191716"/>
        <polygon points="168,60 178,56 186,60 190.4,66 189,74 184,78.5 172,78.5 164.5,68" fill="#8f6048"/>
        <ellipse cx="171.4" cy="63.4" rx="2.6" ry="4" fill="#a87a5e"/>
        <polygon points="181,59 188,61 190,66 185,67.4 181,64" fill="#6e4736"/>
        <polygon points="167.6,75.5 176,72 183.6,74 184.4,80 178,84.6 170,83" fill="#131313"/>
        <polygon points="165.4,47.9 174.7,42.5 185.6,43 192.1,49 193.8,58.8 201.4,66.5 198.7,68.6 190,65.4 185.6,58.8 174.7,55.6 166.5,52.6" fill="#111"/>
        <rect x="167" y="50" width="4.6" height="2.3" fill="#c9822a" transform="rotate(-14 169 51)"/>
        <rect x="191.4" y="53.4" width="2.2" height="3.2" fill="#c9742a"/><!--PH1-->
      </g>
      <text x="7.5" y="15.6" font-family="'Liberation Sans',sans-serif" font-size="9.4" fill="#fff" opacity=".92" letter-spacing=".04">11/03/2024  16:30:26</text>
      </g>
    </svg>
    <div class="abs" style="left:678.5px;top:358.2px;width:102px;height:20.4px;border-radius:10.2px;background:#f3f6f8"></div>
    <svg class="abs" style="left:687px;top:363.5px" width="12" height="10" viewBox="0 0 12 10" fill="none" stroke="#1ab5d1" stroke-width="1.3" stroke-linecap="round" stroke-linejoin="round"><path d="M.8 5 H11 M7.4 1.4 L11 5 L7.4 8.6"/></svg>
    <div class="t" style="left:705.5px;top:363.6px;font-size:9.6px;color:#1ab5d1;-webkit-text-stroke:.3px #1ab5d1;letter-spacing:-.06px">Go to Live View</div>
    <div class="abs" style="left:789px;top:358.2px;width:104.2px;height:20.4px;border-radius:10.2px;background:#f3f6f8"></div>
    <svg class="abs" style="left:796.5px;top:362px" width="13" height="13" viewBox="0 0 13 13" fill="none" stroke="#1ab5d1" stroke-width="1.2" stroke-linejoin="round"><path d="M3.6 1.4 H9.4 L12.2 6.5 L9.4 11.6 H3.6 L.8 6.5 Z"/><circle cx="6.5" cy="6.5" r="2"/></svg>
    <div class="t" style="left:816px;top:363.6px;font-size:9.6px;color:#1ab5d1;-webkit-text-stroke:.3px #1ab5d1;letter-spacing:.08px">Device Settings</div>
  </div></div>
</div>
</body>
</html>
